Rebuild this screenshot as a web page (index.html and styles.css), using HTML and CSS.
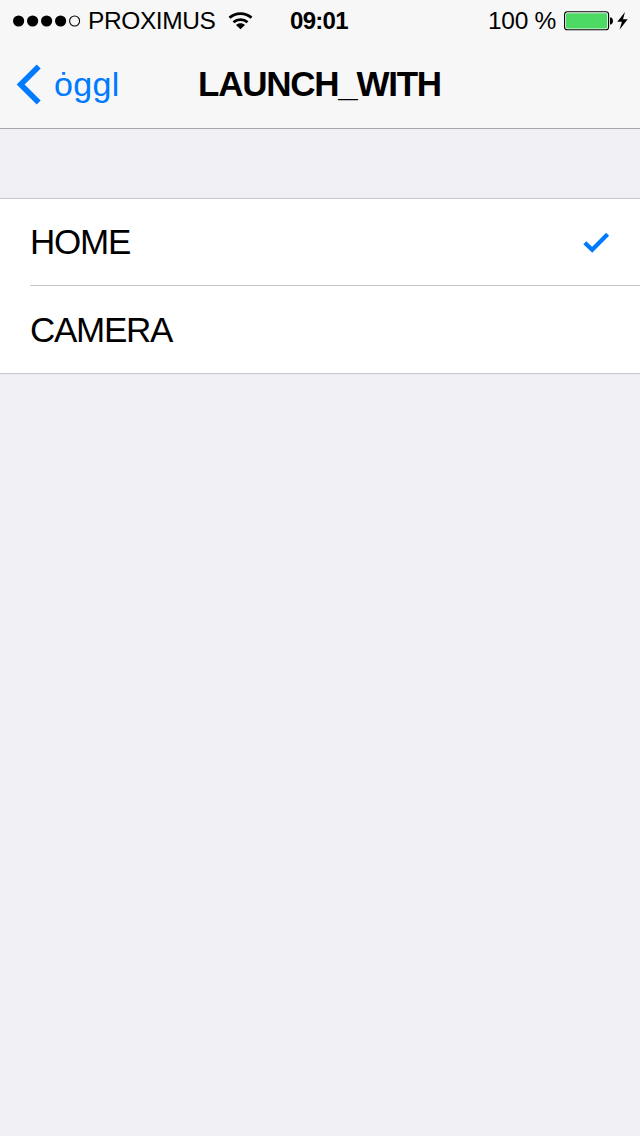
FILE: index.html
```html
<!DOCTYPE html>
<html lang="en">
<head>
<meta charset="utf-8">
<title>LAUNCH_WITH</title>
<link rel="stylesheet" href="styles.css">
</head>
<body>
<header class="header">
  <div class="status">
    <div class="status-left">
      <svg class="signal" width="68" height="12" viewBox="0 0 68 12">
        <circle cx="5.6" cy="6" r="5.6"/><circle cx="19.6" cy="6" r="5.6"/><circle cx="33.6" cy="6" r="5.6"/><circle cx="47.6" cy="6" r="5.6"/>
        <circle cx="61.6" cy="6" r="5" fill="none" stroke="#000" stroke-width="1.1"/>
      </svg>
      <span class="carrier">PROXIMUS</span>
      <svg class="wifi" width="26" height="18" viewBox="0 0 26 18">
        <path d="M1.5 5.8C7.5 .2 17.5 .2 23.5 5.8M5.5 10.2C9.3 6.7 15.7 6.7 19.5 10.2" fill="none" stroke="#000" stroke-width="2.8"/>
        <path d="M8 13C10.4 10.8 14.6 10.8 17 13L12.5 17.3Z"/>
      </svg>
    </div>
    <span class="time">09:01</span>
    <div class="status-right">
      <span class="percent">100 %</span>
      <svg class="battery" width="50" height="20" viewBox="0 0 50 20">
        <rect x=".6" y=".8" width="44" height="18" rx="2.8" fill="#fff" stroke="#000" stroke-width="1.1"/>
        <rect x="2" y="2.2" width="41.2" height="15.2" rx="1.4" fill="#4cd964"/>
        <path d="M46 6.6h1.2Q49 7.5 49 10T47.2 13.4H46Z"/>
      </svg>
      <svg class="bolt" width="11" height="18" viewBox="0 0 11 18">
        <path d="M8 0L.3 9.7H4.9L2.5 17.8L10.7 7.3H6Z"/>
      </svg>
    </div>
  </div>
  <nav class="nav">
    <a class="back">
      <svg width="26" height="42" viewBox="0 0 26 42"><path d="M22.7 2.4L4.6 20.5L22.7 38.6" fill="none" stroke="#007aff" stroke-width="5.6"/></svg>
      <span class="back-label">ȯggl</span>
    </a>
    <h1 class="title">LAUNCH_WITH</h1>
  </nav>
</header>
<main>
  <ul class="list">
    <li class="row"><span class="home">HOME</span>
      <svg width="28" height="22" viewBox="0 0 28 22"><path d="M2.8 11.8L10.2 18.8L25.6 3.3" fill="none" stroke="#007aff" stroke-width="4.2"/></svg>
    </li>
    <li class="row"><span class="camera">CAMERA</span></li>
  </ul>
</main>
</body>
</html>
```
FILE: styles.css
```css
* { box-sizing: border-box; }
body {
  margin: 0;
  min-height: 1136px;
  background: #efeff4;
  color: #000;
  font-family: "Liberation Sans", Arial, sans-serif;
}
svg { display: block; flex: none; }
span, h1 { white-space: nowrap; }
.header {
  height: 129px;
  background: #f7f7f7;
  border-bottom: 1px solid #a7a7ac;
}
.status {
  display: grid;
  grid-template-columns: 290px 60px 290px;
  height: 41px;
  font-size: 24.5px;
  line-height: 42px;
}
.status-left, .status-right { display: flex; align-items: center; height: 41px; }
.status-left { padding-left: 13px; }
.carrier { width: 130px; margin-left: 7px; letter-spacing: -0.4px; }
.wifi { margin-left: 10px; }
.time { font-weight: 700; font-size: 24px; letter-spacing: -0.7px; }
.status-right { padding-left: 138px; }
.percent { width: 70px; letter-spacing: -0.3px; }
.battery { margin-left: 6px; }
.bolt { margin-left: 3px; }
.nav {
  display: grid;
  grid-template-columns: 198px 1fr;
  height: 87px;
  line-height: 87px;
}
.back {
  display: flex;
  align-items: center;
  padding-left: 16px;
  color: #007aff;
  font-size: 34px;
}
.back-label { margin-left: 12px; letter-spacing: 0.3px; }
.title { margin: 0; font-size: 35px; line-height: 85px; letter-spacing: -1.25px; }
.list {
  margin: 69px 0 0;
  padding: 0 0 0 30px;
  list-style: none;
  background: #fff;
  border-top: 1px solid #c8c7cc;
  border-bottom: 1px solid #c8c7cc;
}
.row {
  display: flex;
  align-items: center;
  justify-content: space-between;
  height: 86px;
  padding-right: 30px;
  font-size: 35px;
}
.row > .home { margin-top: -1px; }
.row + .row { height: 88px; border-top: 1px solid #c8c7cc; }
.home { letter-spacing: -1.2px; }
.camera { margin-top: 1px; letter-spacing: -1.3px; }
```
